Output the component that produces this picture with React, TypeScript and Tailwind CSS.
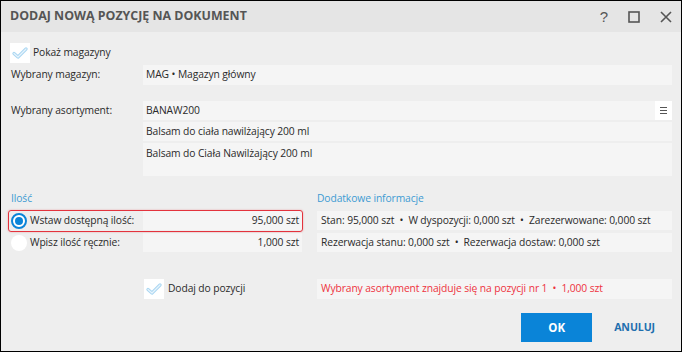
import React from "react";

function Check() {
  return (
    <div className="w-[20px] h-[20px] bg-white flex items-center justify-center shrink-0">
      <svg width="16" height="14" viewBox="0 0 16 14">
        <polyline points="2,7.5 6,11 14,3" fill="none" stroke="#a9d6f2" strokeWidth="3.2" strokeLinejoin="round" strokeLinecap="round" />
        <polyline points="2,7.5 6,11 14,3" fill="none" stroke="#e8f4fc" strokeWidth="1.2" strokeLinejoin="round" strokeLinecap="round" />
      </svg>
    </div>
  );
}

function Radio({ on }: { on: boolean }) {
  return on ? (
    <div className="w-[16px] h-[16px] rounded-full border-[2px] border-[#0a84d8] bg-white flex items-center justify-center shrink-0">
      <div className="w-[8px] h-[8px] rounded-full bg-[#0a84d8]" />
    </div>
  ) : (
    <div className="w-[16px] h-[16px] rounded-full bg-white shrink-0" />
  );
}

export default function App() {
  return (
    <div className="w-[682px] h-[352px] border border-black bg-[#eeeeee] flex flex-col font-['Open_Sans',sans-serif] text-[10.3px] tracking-[-0.1px] text-[#2a2a2a] overflow-hidden">
      <div className="h-[31px] bg-[#e5e5e5] flex items-center pl-[9px] pr-[9px] shrink-0">
        <div className="font-bold text-[12.4px] text-[#555] tracking-[0px] flex-1">DODAJ NOWĄ POZYCJĘ NA DOKUMENT</div>
        <div className="flex items-center gap-[20px] text-[#555]">
          <span className="text-[15px] leading-none font-['Liberation_Sans',sans-serif]">?</span>
          <svg width="12" height="12" viewBox="0 0 12 12"><rect x="1" y="1" width="10" height="10" fill="none" stroke="#555" strokeWidth="1.6" /></svg>
          <svg width="12" height="12" viewBox="0 0 12 12"><path d="M1 1 L11 11 M11 1 L1 11" stroke="#555" strokeWidth="1.6" /></svg>
        </div>
      </div>
      <div className="flex flex-col px-[9px] pt-[11px]">
        <div className="flex items-center gap-[3px] h-[20px]">
          <Check />
          <span>Pokaż magazyny</span>
        </div>
        <div className="flex mt-[2px] h-[20px] items-center">
          <div className="w-[133px] pl-[1px] shrink-0">Wybrany magazyn:</div>
          <div className="flex-1 h-full bg-[#f5f5f5] flex items-center px-[3px]">MAG • Magazyn główny</div>
        </div>
        <div className="flex mt-[16px]">
          <div className="w-[133px] pl-[1px] h-[19px] flex items-center shrink-0">Wybrany asortyment:</div>
          <div className="flex-1 flex flex-col gap-[2px]">
            <div className="h-[19px] bg-[#f5f5f5] flex items-center pl-[3px]">
              <span className="flex-1">BANAW200</span>
              <div className="w-[17px] h-full bg-white flex items-center justify-center">
                <svg width="7" height="7" viewBox="0 0 7 7"><path d="M0 0.5H7M0 3.5H7M0 6.5H7" stroke="#555" strokeWidth="1" /></svg>
              </div>
            </div>
            <div className="h-[19px] bg-[#f5f5f5] flex items-center px-[3px]">Balsam do ciała nawilżający 200 ml</div>
            <div className="h-[33px] bg-[#f5f5f5] px-[3px] pt-[3px]">Balsam do Ciała Nawilżający 200 ml</div>
          </div>
        </div>
        <div className="flex mt-[15px] gap-[15px]">
          <div className="w-[292px] shrink-0 flex flex-col">
            <div className="text-[#3d9bd3] h-[16px] pl-[1px] leading-[14px]">Ilość</div>
            <div className="relative flex items-center h-[19px] mt-[4px]">
              <div className="absolute -left-[2px] -right-[1px] -top-[1px] -bottom-[2px] border-[1.5px] border-[#e3333d] rounded-[3px] shadow-[0_0_2px_rgba(227,51,61,0.4)]" />
              <div className="w-[133px] shrink-0 flex items-center gap-[3px] pl-[1px] whitespace-nowrap">
                <Radio on />
                <span>Wstaw dostępną ilość:</span>
              </div>
              <div className="flex-1 h-full bg-[#f5f5f5] flex items-center justify-end pr-[3px]">95,000 szt</div>
            </div>
            <div className="flex items-center h-[19px] mt-[3px]">
              <div className="w-[133px] shrink-0 flex items-center gap-[3px] pl-[1px] whitespace-nowrap">
                <Radio on={false} />
                <span>Wpisz ilość ręcznie:</span>
              </div>
              <div className="flex-1 h-full bg-[#f5f5f5] flex items-center justify-end pr-[3px]">1,000 szt</div>
            </div>
          </div>
          <div className="flex-1 flex flex-col min-w-0">
            <div className="text-[#3d9bd3] h-[16px] leading-[14px]">Dodatkowe informacje</div>
            <div className="h-[19px] mt-[4px] bg-[#f5f5f5] flex items-center px-[4px] whitespace-nowrap">Stan: 95,000 szt&nbsp; •&nbsp; W dyspozycji: 0,000 szt&nbsp; •&nbsp; Zarezerwowane: 0,000 szt</div>
            <div className="h-[19px] mt-[3px] bg-[#f5f5f5] flex items-center px-[4px] whitespace-nowrap">Rezerwacja stanu: 0,000 szt&nbsp; •&nbsp; Rezerwacja dostaw: 0,000 szt</div>
          </div>
        </div>
        <div className="flex mt-[27px] gap-[15px] items-center">
          <div className="w-[292px] shrink-0 flex items-center gap-[4px] pl-[134px]">
            <Check />
            <span>Dodaj do pozycji</span>
          </div>
          <div className="flex-1 min-w-0 h-[20px] bg-[#f5f5f5] flex items-center px-[4px] text-[#ee3340] whitespace-nowrap">Wybrany asortyment znajduje się na pozycji nr 1&nbsp; •&nbsp; 1,000 szt</div>
        </div>
        <div className="flex justify-end items-center mt-[14px] pr-[17px] gap-[22px]">
          <div className="w-[71px] h-[29px] bg-[#0a84d8] text-white font-bold flex items-center justify-center text-[11.5px]">OK</div>
          <div className="text-[#1f6fae] font-bold text-[10.6px]">ANULUJ</div>
        </div>
      </div>
    </div>
  );
}
